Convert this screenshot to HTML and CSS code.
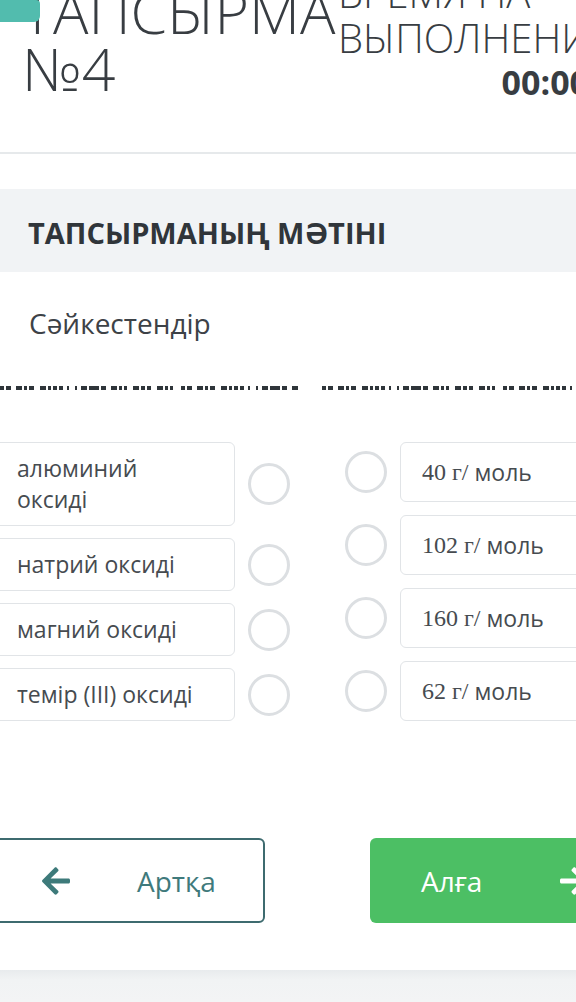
FILE: index.html
```html
<!DOCTYPE html>
<html lang="kk">
<head>
<meta charset="utf-8">
<title>Тапсырма №4</title>
<link rel="stylesheet" href="styles.css">
</head>
<body>
<div class="page">
  <header class="top">
    <span class="tab"></span>
    <h1 class="title">ТАПСЫРМА<br>№4</h1>
    <div class="timer">
      <div class="timer-label">ВРЕМЯ НА<br>ВЫПОЛНЕНИЯ</div>
      <div class="timer-value">00:00</div>
    </div>
  </header>

  <section class="band"><h2>ТАПСЫРМАНЫҢ МӘТІНІ</h2></section>

  <p class="task">Сәйкестендір</p>

  <div class="blanks">
    <svg width="576" height="4" viewBox="0 0 576 4">
      <line x1="0" y1="2" x2="300" y2="2" class="dash"/>
      <line x1="322" y1="2" x2="576" y2="2" class="dash"/>
    </svg>
  </div>

  <div class="match">
    <div class="col col-left">
      <div class="row"><div class="card">алюминий<br>оксиді</div><span class="dot"></span></div>
      <div class="row"><div class="card">натрий оксиді</div><span class="dot"></span></div>
      <div class="row"><div class="card">магний оксиді</div><span class="dot"></span></div>
      <div class="row"><div class="card">темір (III) оксиді</div><span class="dot"></span></div>
    </div>
    <div class="col col-right">
      <div class="row"><span class="dot"></span><div class="card card-r"><span class="num">40 г/</span>&nbsp;моль</div></div>
      <div class="row"><span class="dot"></span><div class="card card-r"><span class="num">102 г/</span>&nbsp;моль</div></div>
      <div class="row"><span class="dot"></span><div class="card card-r"><span class="num">160 г/</span>&nbsp;моль</div></div>
      <div class="row"><span class="dot"></span><div class="card card-r"><span class="num">62 г/</span>&nbsp;моль</div></div>
    </div>
  </div>

  <div class="nav">
    <button class="btn back">
      <svg class="arrow" width="28" height="32" viewBox="0 0 448 512"><path fill="currentColor" d="M257.5 445.1l-22.2 22.2c-9.4 9.4-24.6 9.4-33.9 0L7 273c-9.4-9.4-9.4-24.6 0-33.9L201.4 44.7c9.4-9.4 24.6-9.4 33.9 0l22.2 22.2c9.5 9.5 9.3 25-.4 34.3L136.6 216H424c13.3 0 24 10.7 24 24v32c0 13.3-10.7 24-24 24H136.6l120.5 114.8c9.8 9.3 10 24.8.4 34.3z"/></svg>
      <span class="btn-text">Артқа</span>
    </button>
    <button class="btn next">
      <span class="btn-text">Алға</span>
      <svg class="arrow" width="28" height="32" viewBox="0 0 448 512"><path fill="currentColor" d="M190.5 66.9l22.2-22.2c9.4-9.4 24.6-9.4 33.9 0L441 239c9.4 9.4 9.4 24.6 0 33.9L246.6 467.3c-9.4 9.4-24.6 9.4-33.9 0l-22.2-22.2c-9.5-9.5-9.3-25 .4-34.3L311.4 296H24c-13.3 0-24-10.7-24-24v-32c0-13.3 10.7-24 24-24h287.4L190.9 101.2c-9.8-9.3-10-24.8-.4-34.3z"/></svg>
    </button>
  </div>

  <footer class="foot"></footer>
</div>
</body>
</html>
```
FILE: styles.css
```css
* {
  box-sizing: border-box;
  margin: 0;
  padding: 0;
}

html, body {
  width: 576px;
  height: 1002px;
  overflow: hidden;
  background: #ffffff;
}

body {
  font-family: "Open Sans", "Noto Sans", sans-serif;
  color: #3a3f44;
}

.page {
  position: relative;
  height: 1002px;
  display: flex;
  flex-direction: column;
}

/* header */
.top {
  position: relative;
  display: flex;
  flex: none;
  height: 154px;
  border-bottom: 2px solid #e6e9eb;
}

.tab {
  position: absolute;
  left: 0;
  top: 0;
  width: 40px;
  height: 22px;
  background: #52bcae;
  border-radius: 0 4px 6px 0;
  z-index: 2;
}

.title {
  flex: none;
  width: 338px;
  margin-top: -17px;
  padding-left: 22px;
  font-size: 59px;
  font-weight: 300;
  line-height: 57px;
  color: #383d42;
  white-space: nowrap;
}

.timer {
  flex: none;
  margin-top: -30px;
  white-space: nowrap;
  color: #383d42;
}

.timer-label {
  font-size: 40px;
  font-weight: 300;
  line-height: 45px;
}

.timer-value {
  font-size: 34px;
  font-weight: 700;
  line-height: 45px;
  text-align: right;
  padding-right: 25px;
}

/* band */
.band {
  flex: none;
  margin-top: 35px;
  height: 83px;
  background: #f1f3f5;
  display: flex;
  align-items: center;
  padding-left: 28px;
  padding-top: 4px;
}

.band h2 {
  font-size: 29px;
  font-weight: 700;
  color: #30353a;
  white-space: nowrap;
}

.task {
  flex: none;
  margin-top: 32px;
  padding-left: 29px;
  font-size: 28px;
  line-height: 38px;
  color: #3d4247;
}

.blanks {
  flex: none;
  margin-top: 42px;
  height: 4px;
  line-height: 0;
}

.dash {
  stroke: #2f353a;
  stroke-width: 4;
  stroke-dasharray: 4 2 5 5 6 2 3 2 5 6 6 2 3 2 4 2 4 4 2 6 2 4 6 2 10 2 5 5 6 2 3 2 3 6 6 2 4 2 4 6 6 2 3 2 3 8;
}

/* matching */
.match {
  flex: none;
  display: flex;
  margin-top: 54px;
  margin-left: -8px;
  align-items: flex-start;
}

.col {
  display: flex;
  flex-direction: column;
  flex: none;
}

.col-left {
  gap: 12px;
}

.col-right {
  gap: 13px;
  margin-left: 55px;
}

.row {
  display: flex;
  align-items: center;
}

.card {
  border: 1px solid #e1e4e7;
  border-radius: 6px;
  background: #fff;
  font-size: 23px;
  line-height: 31px;
  color: #464b50;
  white-space: nowrap;
}

.col-left .card {
  width: 243px;
  padding: 10px 20px 10px 24px;
}

.col-left .dot {
  margin-left: 13px;
}

.card-r {
  width: 240px;
  height: 60px;
  margin-left: 13px;
  padding-left: 21px;
  display: flex;
  align-items: center;
}

.num {
  font-family: "Liberation Serif", "DejaVu Serif", serif;
  font-size: 24px;
}

.dot {
  flex: none;
  width: 42px;
  height: 42px;
  border: 3px solid #dcdfe2;
  border-radius: 50%;
  background: #fff;
}

/* navigation */
.nav {
  flex: none;
  display: flex;
  gap: 105px;
  margin-top: 117px;
  margin-left: -35px;
}

.btn {
  flex: none;
  width: 300px;
  height: 85px;
  border-radius: 6px;
  font-family: "Open Sans", "Noto Sans", sans-serif;
  font-size: 28px;
  display: flex;
  align-items: center;
  cursor: pointer;
}

.back {
  background: #fff;
  border: 2px solid #3e6b6f;
  color: #3f7a7c;
  padding-left: 75px;
}

.back .btn-text {
  margin-left: 67px;
}

.next {
  background: #4cbf64;
  border: none;
  color: #ffffff;
  padding-left: 51px;
}

.next .arrow {
  margin-left: 78px;
}

.arrow {
  flex: none;
}

.back .arrow {
  color: #3d7a7a;
}

/* footer */
.foot {
  flex: 1 0 auto;
  margin-top: 47px;
  background: linear-gradient(#e8ebed, #f1f3f4 10px, #f3f4f5);
}
```
